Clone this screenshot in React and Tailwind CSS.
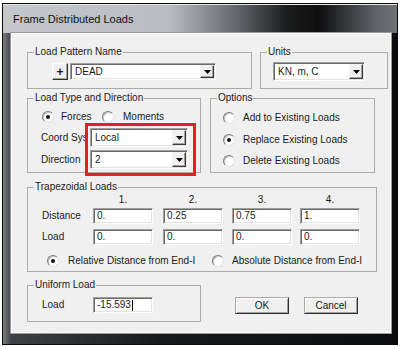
import React from "react";

const sunk =
  "bg-white border border-t-[#a0a0a0] border-l-[#a0a0a0] border-b-[#ffffff] border-r-[#ffffff] shadow-[inset_1px_1px_0_#696969,inset_-1px_-1px_0_#e3e3e3]";

function Dropdown({ value, className }) {
  return (
    <div className={`${className} ${sunk} flex items-stretch p-[1px]`}>
      <div className="flex-1 pl-[3px] flex items-center text-[10px] leading-[12px] whitespace-nowrap">
        {value}
      </div>
      <div className="w-[14px] bg-[#f0f0f0] border border-t-[#f4f4f4] border-l-[#f4f4f4] border-b-[#3c3c3c] border-r-[#3c3c3c] shadow-[inset_-1px_-1px_0_#a0a0a0] flex items-center justify-center pt-[1px]">
        <svg width="7" height="4" viewBox="0 0 7 4">
          <path d="M0 0H7L3.5 4Z" fill="#000" />
        </svg>
      </div>
    </div>
  );
}

function Input({ value, cursor, className = "w-[60px]" }) {
  return (
    <div className={`${className} h-[16px] ${sunk} pl-[3px] flex items-center text-[10px] leading-[12px]`}>
      {value}
      {cursor && <span className="w-[1px] h-[11px] bg-black ml-[1px]" />}
    </div>
  );
}

function Radio({ checked }) {
  return (
    <div className="w-[12px] h-[12px] rounded-full bg-white border border-t-[#7a7a7a] border-l-[#7a7a7a] border-b-[#e2e2e2] border-r-[#e2e2e2] shadow-[inset_1px_1px_0_#c8c8c8] flex items-center justify-center shrink-0">
      {checked && <div className="w-[4px] h-[4px] rounded-full bg-[#111]" />}
    </div>
  );
}

function Btn({ children, className }) {
  return (
    <div
      className={`h-[17px] bg-[#f0f0f0] border border-t-[#a8a8a8] border-l-[#a8a8a8] border-b-[#303030] border-r-[#303030] shadow-[inset_1px_1px_0_#ffffff,inset_-1px_-1px_0_#a0a0a0] flex items-center justify-center text-[10px] leading-[12px] ${className}`}
    >
      {children}
    </div>
  );
}

function Group({ title, className, children }) {
  return (
    <fieldset
      className={`border border-[#ababab] m-0 p-0 min-w-0 ${className}`}
    >
      <legend className="ml-[6px] px-[1px] text-[10px] leading-[12px]">{title}</legend>
      {children}
    </fieldset>
  );
}

export default function App() {
  return (
    <div className="w-[400px] h-[348px] bg-white pt-[3px] px-[2px] overflow-hidden font-['Liberation_Sans',Arial,sans-serif] text-[#1a1a1a]">
      <div className="w-[396px] h-[342px] border border-[#0a0a0a] flex flex-col bg-[#1e2124]">
        {/* title bar */}
        <div className="h-[29px] shrink-0 border-t border-[#e8e8e8] bg-[linear-gradient(to_right,#c4c8cc_0%,#babec2_42%,#6a6e72_58%,#1c1d1e_72%,#0e0e0e_80%,#3a3d40_88%,#62666a_95%,#6e7276_100%)] pl-[10px] pt-[8px] text-[11px] leading-[13px] text-[#101010]">
          Frame Distributed Loads
        </div>
        {/* body */}
        <div className="flex-1 flex pl-[8px] pr-[6px] pb-[11px] bg-[linear-gradient(to_right,#7a7f84_0px,#3e4246_8px,#17191b_40%,#0c0d0e_100%)]">
          <div className="flex-1 bg-[#f0f0f0] border border-[#fbfbfb] shadow-[0_0_0_1px_#9a9a9a] pt-[12px] pl-[15px] flex flex-col">
            {/* Row 1 */}
            <div className="flex">
              <Group title="Load Pattern Name" className="w-[225px] h-[43px]">
                <div className="flex pl-[24px] pt-[5px]">
                  <div className="w-[16px] h-[17px] bg-[#f0f0f0] border border-t-[#ffffff] border-l-[#ffffff] border-b-[#303030] border-r-[#303030] shadow-[inset_-1px_-1px_0_#a0a0a0] flex items-center justify-center text-[12px] leading-[12px] font-bold">
                    +
                  </div>
                  <Dropdown value="DEAD" className="ml-[2px] w-[146px] h-[17px]" />
                </div>
              </Group>
              <Group title="Units" className="ml-[8px] w-[128px] h-[43px]">
                <div className="pl-[12px] pt-[4px]">
                  <Dropdown value="KN, m, C" className="w-[92px] h-[19px]" />
                </div>
              </Group>
            </div>

            {/* Row 2 */}
            <div className="relative flex mt-[3px]">
              <Group title="Load Type and Direction" className="w-[174px] h-[81px]">
                <div className="pt-[6px] pl-[14px]">
                  <div className="h-[14px] flex items-center text-[10px] leading-[12px]">
                    <Radio checked />
                    <span className="ml-[7px] w-[41px]">Forces</span>
                    <Radio />
                    <span className="ml-[9px]">Moments</span>
                  </div>
                </div>
                <div className="mt-[4px] pl-[13px] flex items-center text-[10px] leading-[12px]">
                  <span className="w-[49px] whitespace-nowrap">Coord Sys</span>
                  <Dropdown value="Local" className="w-[98px] h-[19px]" />
                </div>
                <div className="mt-[3px] pl-[13px] flex items-center text-[10px] leading-[12px]">
                  <span className="w-[49px]">Direction</span>
                  <Dropdown value="2" className="w-[98px] h-[19px]" />
                </div>
              </Group>
              <Group title="Options" className="ml-[9px] w-[165px] h-[81px]">
                <div className="pt-[7px] pl-[12px] flex flex-col gap-[8px] text-[10px] leading-[12px]">
                  <div className="h-[14px] flex items-center">
                    <Radio />
                    <span className="ml-[8px]">Add to Existing Loads</span>
                  </div>
                  <div className="h-[14px] flex items-center">
                    <Radio checked />
                    <span className="ml-[8px]">Replace Existing Loads</span>
                  </div>
                  <div className="h-[14px] flex items-center -mt-[1px]">
                    <Radio />
                    <span className="ml-[8px]">Delete Existing Loads</span>
                  </div>
                </div>
              </Group>
              {/* red annotation box */}
              <div className="absolute left-[58px] top-[31px] w-[111px] h-[53px] border-[3px] border-[#ec1c24]" />
            </div>

            {/* Row 3 */}
            <Group title="Trapezoidal Loads" className="mt-[8px] w-[350px] h-[91px]">
              <div className="pl-[14px] text-[10px] leading-[12px]">
                <div className="flex pl-[51px] h-[12px] mt-[1px]">
                  <span className="w-[60px] text-center">1.</span>
                  <span className="ml-[10px] w-[60px] text-center">2.</span>
                  <span className="ml-[9px] w-[60px] text-center">3.</span>
                  <span className="ml-[8px] w-[60px] text-center">4.</span>
                </div>
                <div className="flex items-center mt-[2px]">
                  <span className="w-[51px]">Distance</span>
                  <Input value="0." />
                  <div className="ml-[10px]"><Input value="0.25" /></div>
                  <div className="ml-[9px]"><Input value="0.75" /></div>
                  <div className="ml-[8px]"><Input value="1." /></div>
                </div>
                <div className="flex items-center mt-[5px]">
                  <span className="w-[51px]">Load</span>
                  <Input value="0." />
                  <div className="ml-[10px]"><Input value="0." /></div>
                  <div className="ml-[9px]"><Input value="0." /></div>
                  <div className="ml-[8px]"><Input value="0." /></div>
                </div>
                <div className="flex items-center h-[14px] mt-[9px] pl-[5px]">
                  <div className="w-[165px] flex items-center">
                    <Radio checked />
                    <span className="ml-[9px]">Relative Distance from End-I</span>
                  </div>
                  <Radio />
                  <span className="ml-[8px]">Absolute Distance from End-I</span>
                </div>
              </div>
            </Group>

            {/* Row 4 */}
            <div className="flex items-start mt-[7px]">
              <Group title="Uniform Load" className="w-[174px] h-[43px]">
                <div className="pl-[14px] pt-[6px] flex items-center text-[10px] leading-[12px]">
                  <span className="w-[51px]">Load</span>
                  <Input value="-15.593" cursor />
                </div>
              </Group>
              <div className="ml-[34px] mt-[18px] flex gap-[15px]">
                <Btn className="w-[54px]">OK</Btn>
                <Btn className="w-[54px]">Cancel</Btn>
              </div>
            </div>
          </div>
        </div>
      </div>
    </div>
  );
}
